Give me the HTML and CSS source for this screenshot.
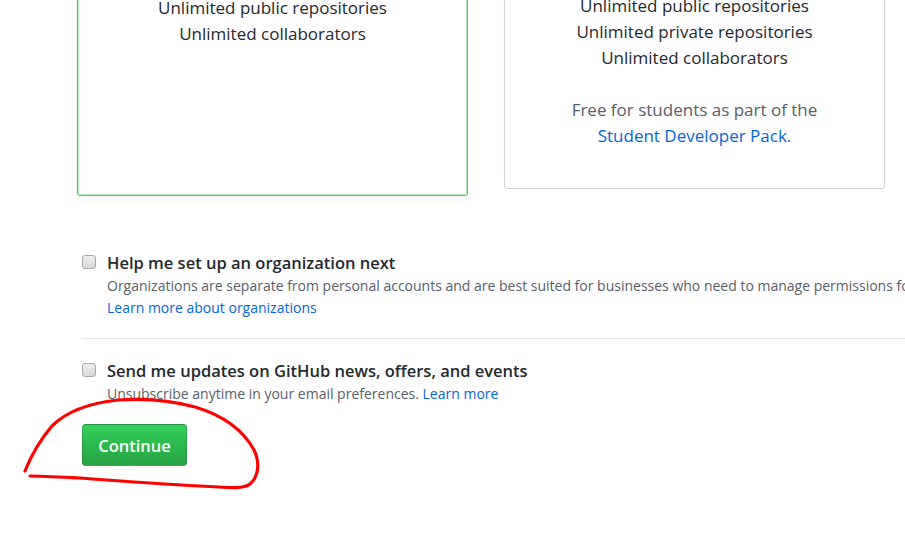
FILE: index.html
```html
<!DOCTYPE html>
<html lang="en">
<head>
<meta charset="utf-8">
<title>Choose your plan</title>
<link rel="stylesheet" href="styles.css">
</head>
<body>
<div class="page">
  <div class="plans">
    <div class="plan plan-free">
      <p class="line">Unlimited public repositories</p>
      <p class="line">Unlimited collaborators</p>
    </div>
    <div class="plan plan-dev">
      <p class="line">Unlimited public repositories</p>
      <p class="line">Unlimited private repositories</p>
      <p class="line">Unlimited collaborators</p>
      <p class="line muted spaced">Free for students as part of the</p>
      <p class="line"><a class="link" href="#">Student Developer Pack.</a></p>
    </div>
  </div>

  <div class="options">
    <label class="option option-first">
      <input type="checkbox" class="check">
      <span class="option-body">
        <span class="option-title">Help me set up an organization next</span>
        <span class="option-note">Organizations are separate from personal accounts and are best suited for businesses who need to manage permissions for many employees.</span>
        <a class="option-link link" href="#">Learn more about organizations</a>
      </span>
    </label>
    <label class="option option-second">
      <input type="checkbox" class="check">
      <span class="option-body">
        <span class="option-title">Send me updates on GitHub news, offers, and events</span>
        <span class="option-note">Unsubscribe anytime in your email preferences. <a class="link" href="#">Learn more</a></span>
      </span>
    </label>
    <button class="btn-continue" type="button">Continue</button>
  </div>
</div>

<svg class="scribble" width="905" height="539" viewBox="0 0 905 539" aria-hidden="true">
  <path d="M25 471 C 31 456, 40 440, 52 426 C 66 412, 90 403, 118 400 C 145 398, 170 400, 195 407 C 222 415, 243 430, 254 450 C 260 462, 259 476, 250 484 C 244 489, 232 488, 200 486 C 160 484, 120 481, 80 478 C 60 477, 42 476, 30 476"
        fill="none" stroke="#ff0000" stroke-width="3.2" stroke-linecap="round" stroke-linejoin="round"/>
</svg>
</body>
</html>
```

FILE: styles.css
```css
html, body {
  margin: 0;
  padding: 0;
  background: #ffffff;
  overflow: hidden;
}

body {
  width: 905px;
  height: 539px;
  position: relative;
  font-family: "Open Sans", "Liberation Sans", sans-serif;
  color: #24292e;
}

.page {
  padding-left: 77px;
}

.plans {
  display: grid;
  grid-template-columns: 391px 381px;
  column-gap: 36px;
  align-items: start;
  margin-top: -8px;
}

.plan {
  background: #fff;
  border-radius: 3px;
  text-align: center;
  font-size: 17px;
  line-height: 26px;
}

.plan-free {
  border: 1px solid #34d058;
  box-shadow: inset 0 0 0 1px rgba(52, 208, 88, 0.35), 0 2px 10px rgba(27, 31, 35, 0.06);
  padding: 2px 0 148px;
}

.plan-dev {
  border: 1px solid #d1d5da;
  padding: 0 0 39px;
}

.line {
  margin: 0;
  white-space: nowrap;
}

.muted {
  color: #586069;
}

.spaced {
  margin-top: 26px;
}

.link {
  color: #0366d6;
  text-decoration: none;
}

.options {
  margin-left: 5px;
  margin-top: 55px;
}

.option {
  display: flex;
  align-items: flex-start;
  gap: 11px;
  cursor: pointer;
}

.option-first {
  padding-bottom: 19px;
  border-bottom: 1px solid #e1e4e8;
  margin-right: -80px;
}

.option-second {
  padding-top: 20px;
}

.check {
  appearance: none;
  -webkit-appearance: none;
  margin: 4px 0 0;
  width: 14px;
  height: 14px;
  flex: none;
  border: 1px solid #a9a9a9;
  border-radius: 3px;
  background: linear-gradient(#ededed, #d9d9d9);
  box-sizing: border-box;
}

.option-body {
  display: flex;
  flex-direction: column;
}

.option-title {
  font-size: 16.5px;
  font-weight: 600;
  line-height: 24px;
  white-space: nowrap;
}

.option-note {
  font-size: 14px;
  line-height: 22px;
  color: #586069;
  white-space: nowrap;
}

.option-link {
  font-size: 14px;
  line-height: 22px;
}

.btn-continue {
  display: block;
  margin-top: 19px;
  width: 105px;
  height: 42px;
  padding: 0;
  border: 1px solid rgba(27, 31, 35, 0.2);
  border-radius: 4px;
  background: linear-gradient(-180deg, #34d058 0%, #28a745 90%);
  color: #fff;
  font-family: inherit;
  font-size: 16.5px;
  font-weight: 600;
  cursor: pointer;
}

.scribble {
  position: absolute;
  left: 0;
  top: 0;
  pointer-events: none;
}
```
